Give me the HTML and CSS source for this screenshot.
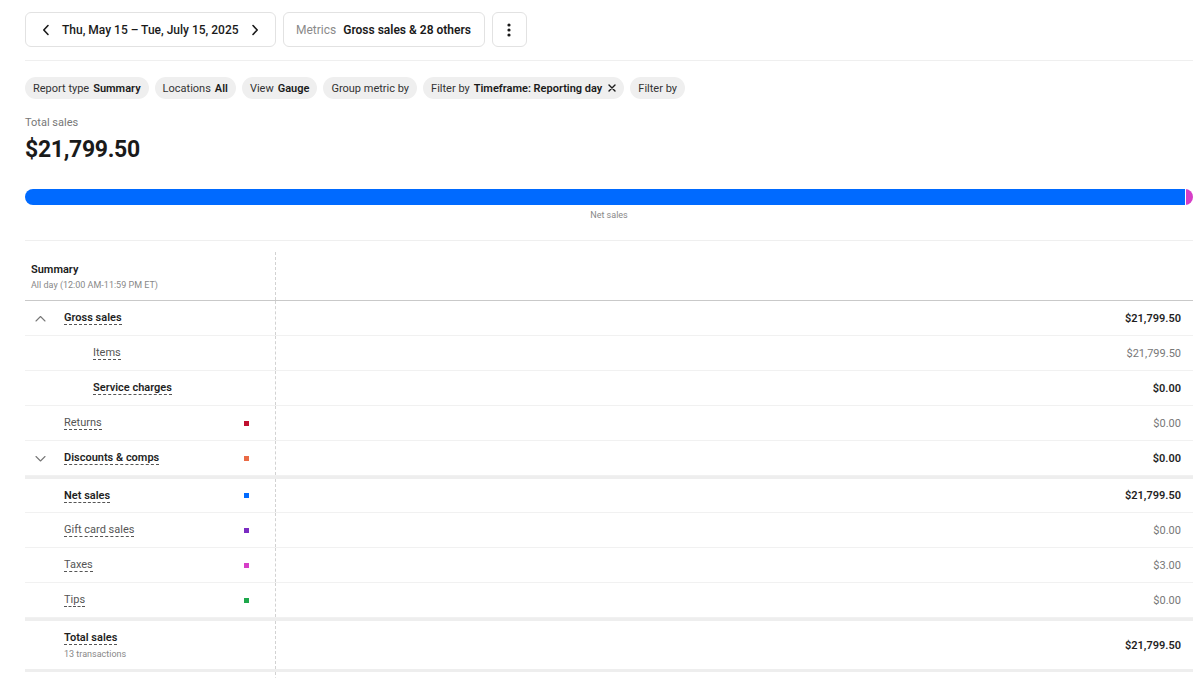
FILE: index.html
```html
<!DOCTYPE html>
<html lang="en">
<head>
    <meta charset="UTF-8">
    <meta name="viewport" content="width=device-width, initial-scale=1.0">
    <title>Sales summary</title>
    <link rel="stylesheet" href="styles.css">
</head>
<body>
    <div class="toolbar">
        <div class="btn btn-date">
            <svg width="8" height="12" viewBox="0 0 8 12"><path d="M6 1.5 1.8 6 6 10.5" fill="none" stroke="#1a1a1a" stroke-width="1.6" stroke-linecap="round" stroke-linejoin="round"/></svg>
            <span>Thu, May 15 – Tue, July 15, 2025</span>
            <svg width="8" height="12" viewBox="0 0 8 12"><path d="M2 1.5 6.2 6 2 10.5" fill="none" stroke="#1a1a1a" stroke-width="1.6" stroke-linecap="round" stroke-linejoin="round"/></svg>
        </div>
        <div class="btn btn-metrics">
            <span class="muted">Metrics</span>
            <span>Gross sales &amp; 28 others</span>
        </div>
        <div class="btn btn-more">
            <svg width="4" height="14" viewBox="0 0 4 14"><circle cx="2" cy="2" r="1.6" fill="#1a1a1a"/><circle cx="2" cy="7" r="1.6" fill="#1a1a1a"/><circle cx="2" cy="12" r="1.6" fill="#1a1a1a"/></svg>
        </div>
    </div>

    <div class="divider"></div>

    <div class="chips">
        <span class="chip">Report type <b>Summary</b></span>
        <span class="chip">Locations <b>All</b></span>
        <span class="chip">View <b>Gauge</b></span>
        <span class="chip">Group metric by</span>
        <span class="chip">Filter by <b>Timeframe: Reporting day</b>
            <svg width="8" height="8" viewBox="0 0 8 8"><path d="M1 1 7 7M7 1 1 7" stroke="#1a1a1a" stroke-width="1.4" stroke-linecap="round"/></svg>
        </span>
        <span class="chip">Filter by</span>
    </div>

    <div class="total-label">Total sales</div>
    <div class="total-amount">$21,799.50</div>

    <div class="gauge">
        <div class="gauge-net"></div>
        <div class="gauge-tax"></div>
    </div>
    <div class="gauge-label">Net sales</div>

    <div class="divider divider-low"></div>

    <div class="report">
        <div class="row row-head">
            <div class="cell-name head-name">
                <div class="head-title">Summary</div>
                <div class="head-sub">All day (12:00 AM-11:59 PM ET)</div>
            </div>
            <div class="cell-value"></div>
        </div>

        <div class="row">
            <div class="cell-name">
                <span class="toggle"><svg width="11" height="7" viewBox="0 0 11 7"><path d="M1 6 5.5 1.5 10 6" fill="none" stroke="#777" stroke-width="1.1" stroke-linecap="round" stroke-linejoin="round"/></svg></span>
                <span class="label strong">Gross sales</span>
            </div>
            <div class="cell-value strong">$21,799.50</div>
        </div>
        <div class="row">
            <div class="cell-name indent">
                <span class="label">Items</span>
            </div>
            <div class="cell-value">$21,799.50</div>
        </div>
        <div class="row">
            <div class="cell-name indent">
                <span class="label strong">Service charges</span>
            </div>
            <div class="cell-value strong">$0.00</div>
        </div>
        <div class="row">
            <div class="cell-name">
                <span class="toggle"></span>
                <span class="label">Returns</span>
                <span class="swatch swatch-returns"></span>
            </div>
            <div class="cell-value">$0.00</div>
        </div>
        <div class="row">
            <div class="cell-name">
                <span class="toggle"><svg width="11" height="7" viewBox="0 0 11 7"><path d="M1 1.5 5.5 6 10 1.5" fill="none" stroke="#777" stroke-width="1.1" stroke-linecap="round" stroke-linejoin="round"/></svg></span>
                <span class="label strong">Discounts &amp; comps</span>
                <span class="swatch swatch-discounts"></span>
            </div>
            <div class="cell-value strong">$0.00</div>
        </div>

        <div class="row row-section">
            <div class="cell-name">
                <span class="toggle"></span>
                <span class="label strong">Net sales</span>
                <span class="swatch swatch-net"></span>
            </div>
            <div class="cell-value strong">$21,799.50</div>
        </div>
        <div class="row">
            <div class="cell-name">
                <span class="toggle"></span>
                <span class="label">Gift card sales</span>
                <span class="swatch swatch-gift"></span>
            </div>
            <div class="cell-value">$0.00</div>
        </div>
        <div class="row">
            <div class="cell-name">
                <span class="toggle"></span>
                <span class="label">Taxes</span>
                <span class="swatch swatch-taxes"></span>
            </div>
            <div class="cell-value">$3.00</div>
        </div>
        <div class="row">
            <div class="cell-name">
                <span class="toggle"></span>
                <span class="label">Tips</span>
                <span class="swatch swatch-tips"></span>
            </div>
            <div class="cell-value">$0.00</div>
        </div>

        <div class="row row-total">
            <div class="cell-name">
                <span class="toggle"></span>
                <div>
                    <span class="label strong">Total sales</span>
                    <div class="sub">13 transactions</div>
                </div>
            </div>
            <div class="cell-value strong">$21,799.50</div>
        </div>
        <div class="row row-tail">
            <div class="cell-name"></div>
            <div class="cell-value"></div>
        </div>
    </div>
</body>
</html>
```

FILE: styles.css
```css
body {
    margin: 0;
    padding: 12px 7px 0 25px;
    font-family: Roboto, "Liberation Sans", sans-serif;
    color: #1a1a1a;
    background-color: #fff;
    overflow: hidden;
}
.toolbar {
    display: flex;
    gap: 7px;
}
.btn {
    display: flex;
    align-items: center;
    height: 35px;
    box-sizing: border-box;
    border: 1px solid #e2e2e2;
    border-radius: 6px;
    font-size: 12px;
    font-weight: 500;
    white-space: nowrap;
}
.btn-date {
    width: 251px;
    padding: 0 16px;
    gap: 12px;
}
.btn-metrics {
    padding: 0 13px 0 12px;
    gap: 7px;
    font-weight: 600;
}
.btn-metrics .muted {
    color: #8a8a8a;
    font-weight: 400;
}
.btn-more {
    width: 35px;
    justify-content: center;
}
.divider {
    margin-top: 13px;
    border-top: 1px solid #efefef;
}
.divider-low {
    margin-top: 19px;
}
.chips {
    display: flex;
    gap: 6px;
    margin-top: 16px;
}
.chip {
    display: flex;
    align-items: center;
    gap: 4px;
    height: 22px;
    padding: 0 8px;
    border-radius: 11px;
    background-color: #efefef;
    font-size: 11px;
    color: #333;
    white-space: nowrap;
}
.chip b {
    font-weight: 600;
    color: #1a1a1a;
}
.chip svg {
    margin-left: 2px;
}
.total-label {
    margin-top: 17px;
    font-size: 11px;
    line-height: 14px;
    color: #777;
}
.total-amount {
    margin-top: 5px;
    font-size: 23px;
    line-height: 30px;
    font-weight: 700;
    letter-spacing: -0.3px;
}
.gauge {
    display: flex;
    gap: 1px;
    height: 16px;
    margin-top: 24px;
    border-radius: 8px;
    overflow: hidden;
}
.gauge-net {
    flex: 1;
    background-color: #006aff;
}
.gauge-tax {
    width: 7px;
    background-color: #d63ec7;
}
.gauge-label {
    margin-top: 4px;
    text-align: center;
    font-size: 9px;
    line-height: 12px;
    color: #888;
}
.report {
    margin-top: 11px;
}
.row {
    display: flex;
    height: 35px;
    box-sizing: border-box;
    border-bottom: 1px solid #f1f1f1;
    font-size: 11px;
}
.cell-name {
    width: 251px;
    box-sizing: border-box;
    display: flex;
    align-items: center;
    padding: 0 26px 0 10px;
    border-right: 1px dashed #d2d2d2;
}
.cell-value {
    flex: 1;
    display: flex;
    align-items: center;
    justify-content: flex-end;
    padding-right: 12px;
    color: #777;
}
.row-head {
    height: 49px;
    border-bottom: 1px solid #c9c9c9;
}
.head-name {
    display: block;
    padding: 11px 6px 0;
}
.head-title {
    font-weight: 600;
    line-height: 14px;
}
.head-sub {
    margin-top: 2px;
    font-size: 9px;
    line-height: 12px;
    color: #888;
}
.toggle {
    display: flex;
    align-items: center;
    width: 29px;
    flex-shrink: 0;
}
.indent {
    padding-left: 68px;
}
.label {
    color: #555;
    border-bottom: 1px dashed #555;
    line-height: 13px;
}
.strong {
    font-weight: 600;
    color: #1f1f1f;
}
.cell-value.strong {
    color: #1f1f1f;
}
.swatch {
    width: 5px;
    height: 5px;
    margin-left: auto;
}
.swatch-returns { background-color: #c0102f; }
.swatch-discounts { background-color: #ea6a45; }
.swatch-net { background-color: #006aff; }
.swatch-gift { background-color: #7b2cc2; }
.swatch-taxes { background-color: #d63ec7; }
.swatch-tips { background-color: #1ea84c; }
.row-section {
    height: 37px;
    border-top: 3px solid #eeeeee;
}
.row-total {
    height: 54px;
    border-top: 3px solid #eeeeee;
    border-bottom: 3px solid #eeeeee;
}
.sub {
    margin-top: 4px;
    font-size: 9px;
    line-height: 12px;
    color: #888;
}
.row-tail {
    border-bottom: none;
}
```
